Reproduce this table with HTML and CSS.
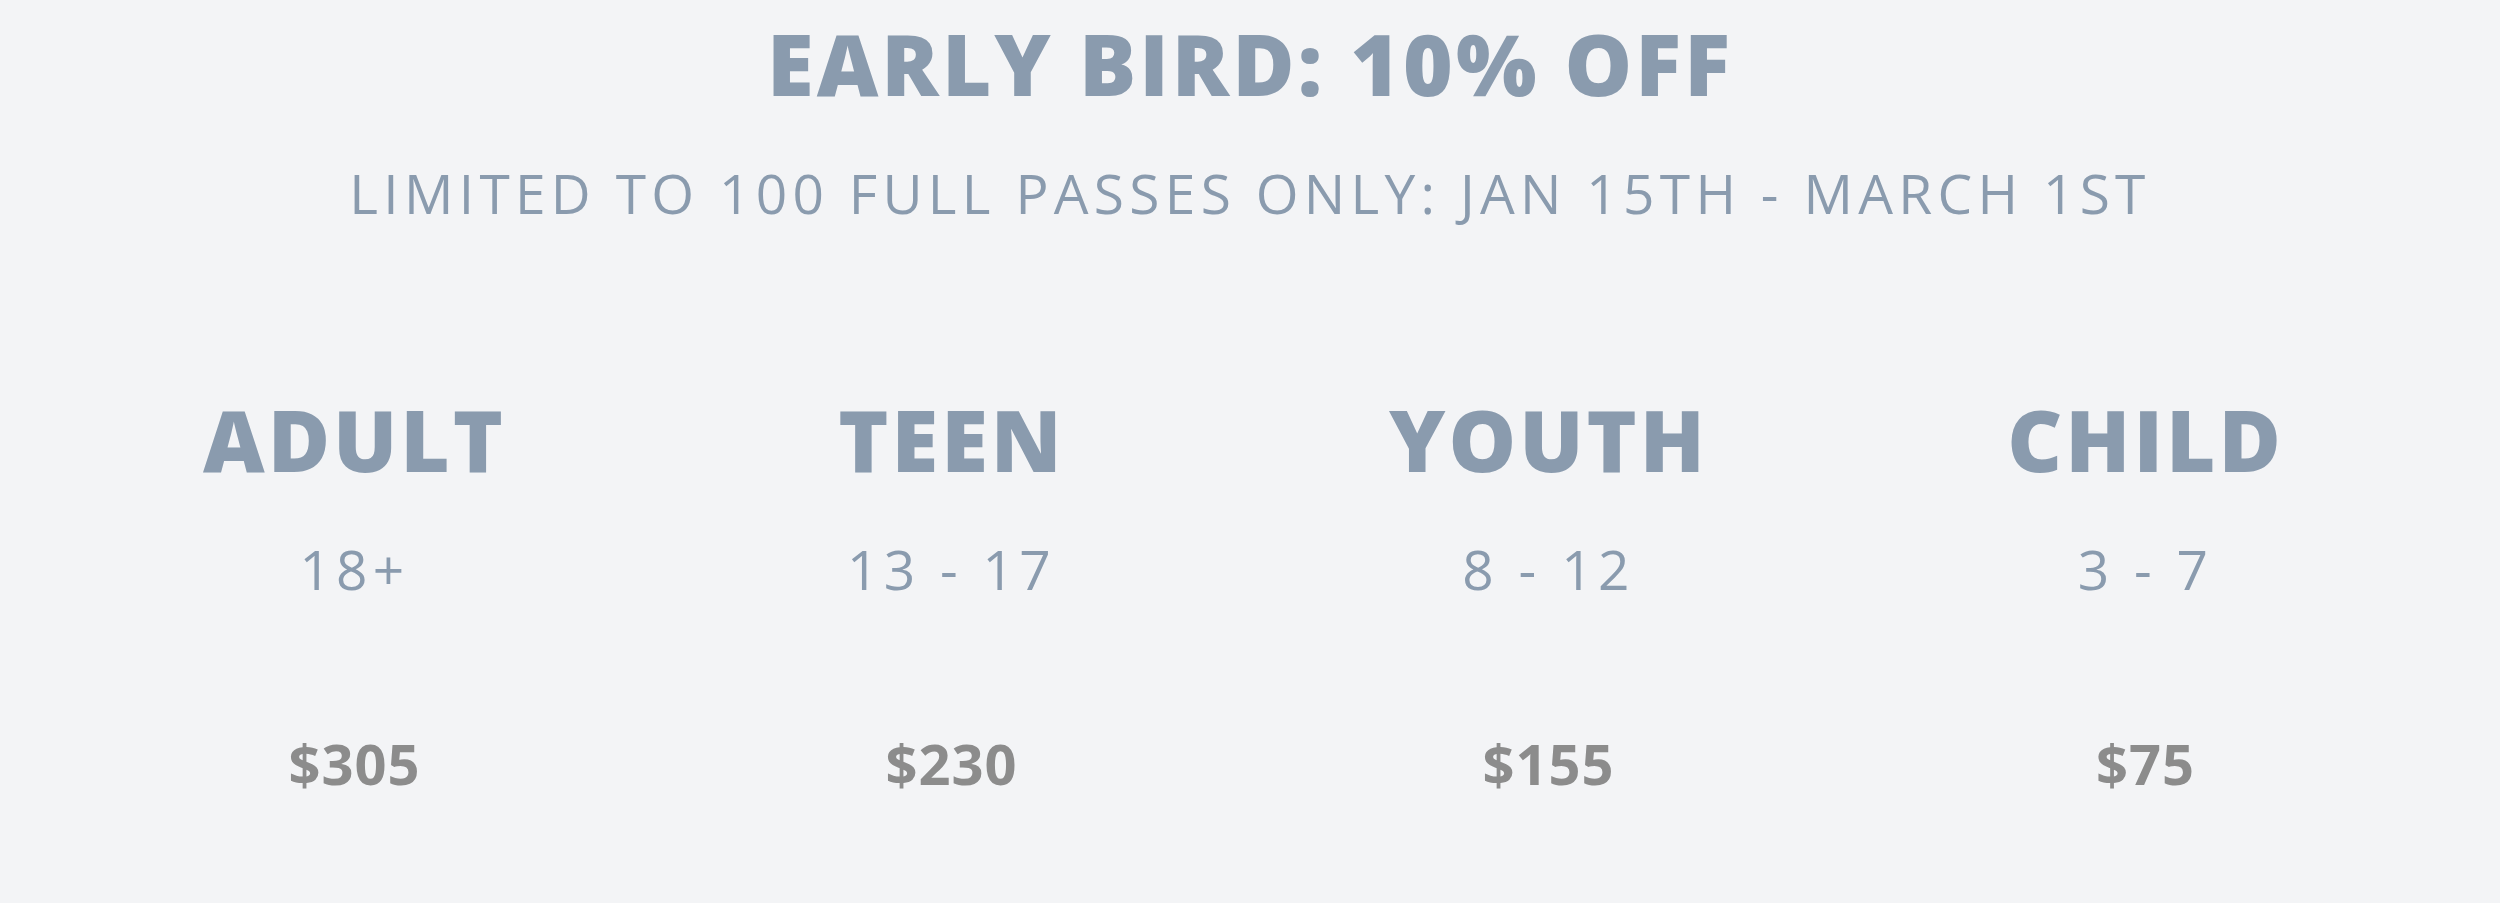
FILE: index.html
```html
<!DOCTYPE html>
<html lang="en">
<head>
<meta charset="utf-8">
<title>Early Bird</title>
<link rel="stylesheet" href="styles.css">
</head>
<body>
<section class="pricing">
  <header class="intro">
    <h1 class="title">EARLY BIRD: 10% OFF</h1>
    <p class="subtitle">LIMITED TO 100 FULL PASSES ONLY: JAN 15TH - MARCH 1ST</p>
  </header>
  <div class="tiers">
    <div class="tier">
      <h2 class="tier-name">ADULT</h2>
      <p class="tier-age">18+</p>
      <p class="tier-price">$305</p>
    </div>
    <div class="tier">
      <h2 class="tier-name">TEEN</h2>
      <p class="tier-age">13 - 17</p>
      <p class="tier-price">$230</p>
    </div>
    <div class="tier">
      <h2 class="tier-name">YOUTH</h2>
      <p class="tier-age">8 - 12</p>
      <p class="tier-price">$155</p>
    </div>
    <div class="tier">
      <h2 class="tier-name">CHILD</h2>
      <p class="tier-age">3 - 7</p>
      <p class="tier-price">$75</p>
    </div>
  </div>
</section>
</body>
</html>
```
FILE: styles.css
```css
html, body {
  margin: 0;
  padding: 0;
}
body {
  background: #f3f4f6;
  font-family: "Open Sans", "Liberation Sans", sans-serif;
  color: #8a9bae;
  width: 2500px;
  height: 903px;
  overflow: hidden;
}
.pricing {
  padding-top: 21px;
}
.intro {
  text-align: center;
}
.title {
  margin: 0;
  font-size: 85px;
  line-height: 1;
  font-weight: 800;
  letter-spacing: 3px;
}
.subtitle {
  margin: 59px 0 0;
  font-size: 55px;
  line-height: 1;
  font-weight: 400;
  letter-spacing: 5.3px;
}
.tiers {
  display: grid;
  grid-template-columns: repeat(4, 1fr);
  padding: 0 56px 0 56px;
  margin-top: 177px;
}
.tier {
  display: flex;
  flex-direction: column;
  align-items: center;
  text-align: center;
}
.tier-name {
  margin: 0;
  font-size: 85px;
  line-height: 1;
  font-weight: 800;
  letter-spacing: 3px;
}
.tier-age {
  margin: 59px 0 0;
  font-size: 55px;
  line-height: 1;
  font-weight: 400;
  letter-spacing: 5.3px;
}
.tier-price {
  margin: 139px 0 0;
  font-size: 56px;
  line-height: 1;
  font-weight: 700;
  color: #8c8c8c;
  letter-spacing: 1px;
}
```
